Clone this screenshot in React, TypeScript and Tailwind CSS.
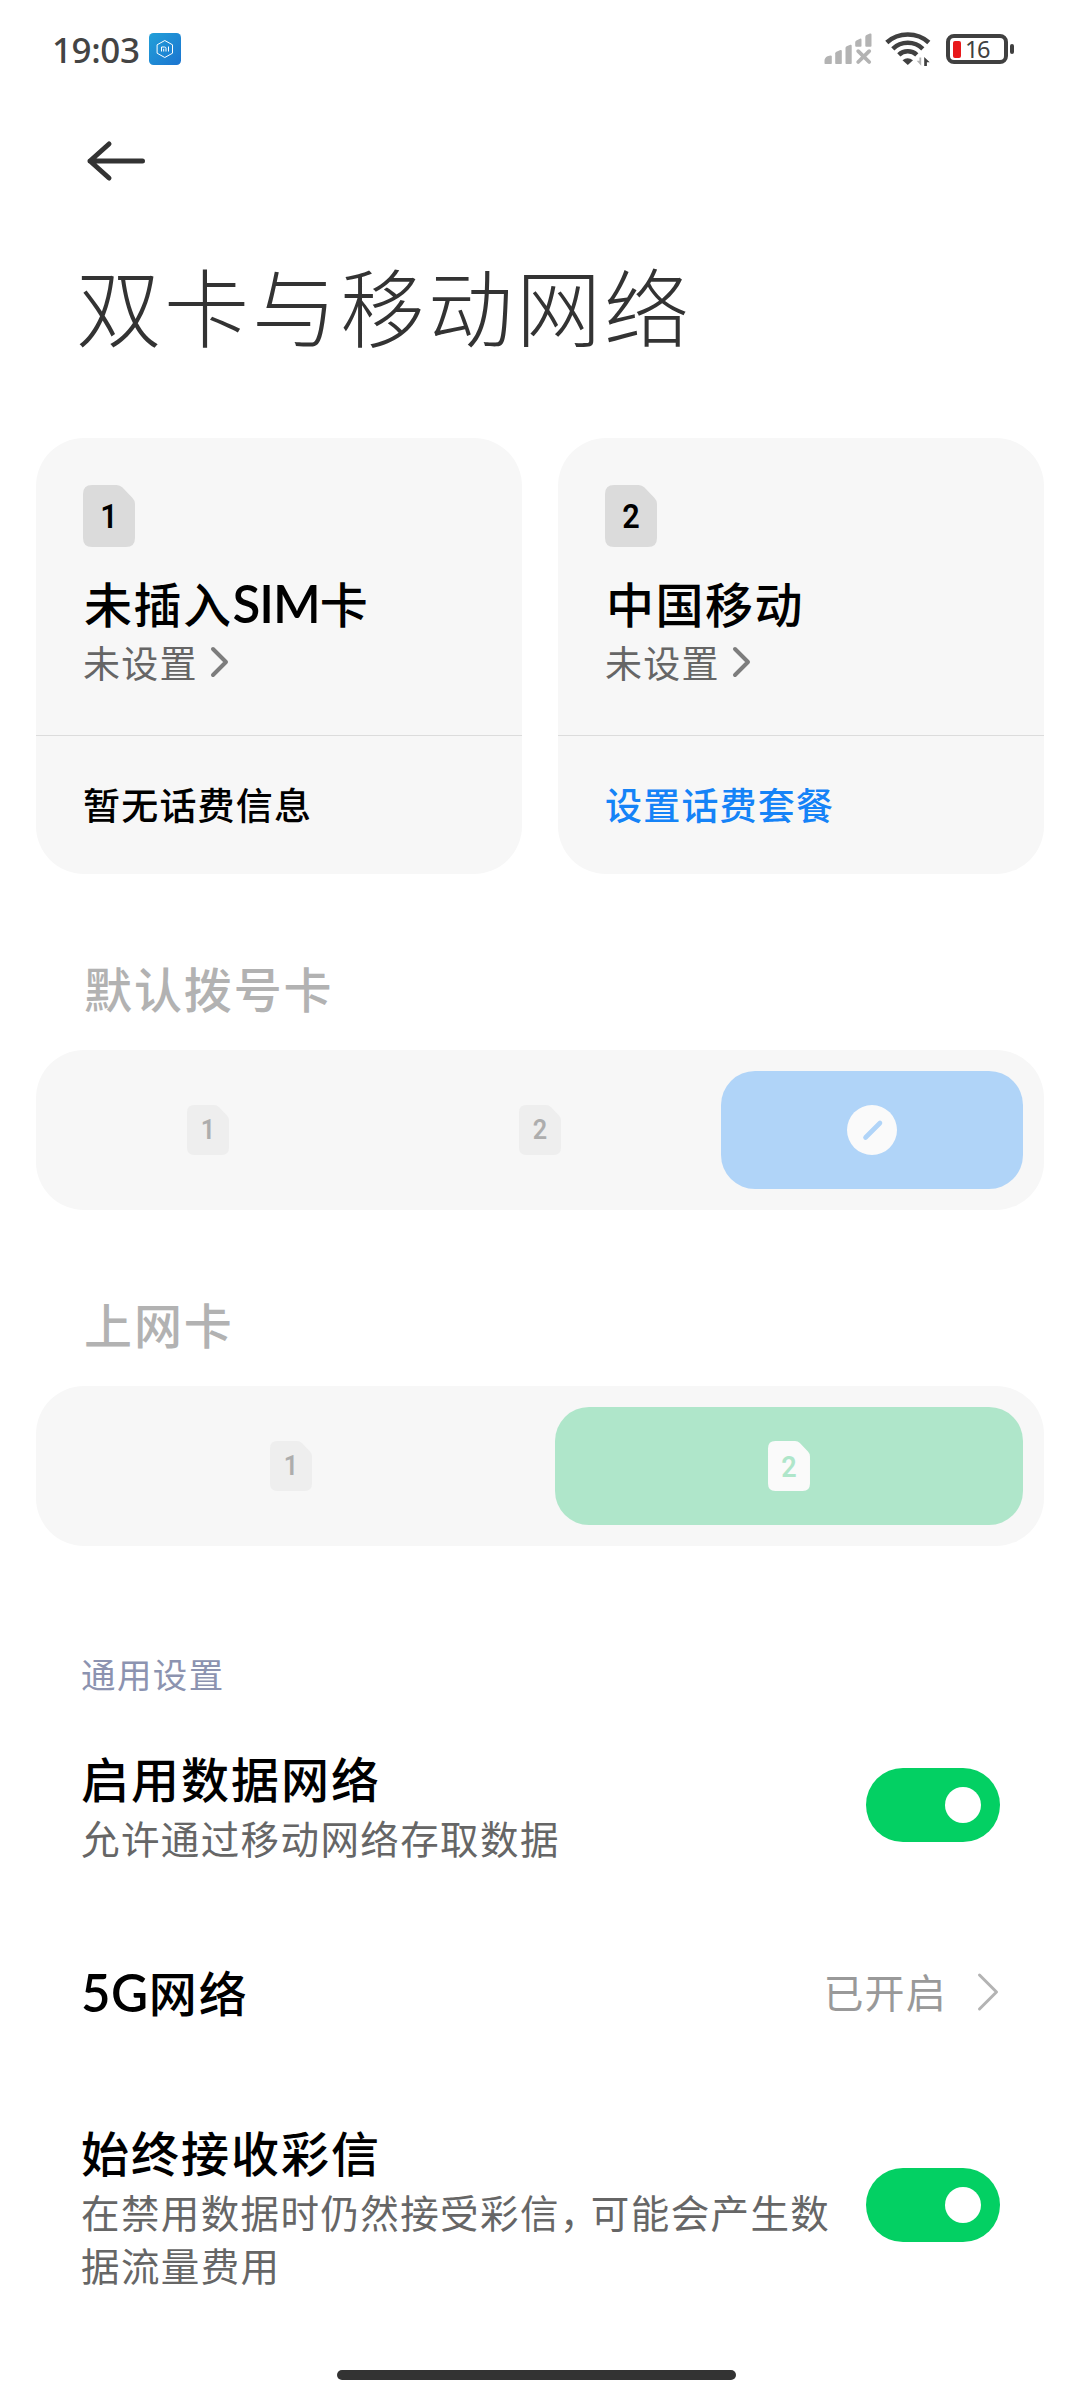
import type { ReactNode } from "react";

interface SimCardProps {
  slot: number;
  name: ReactNode;
  status: string;
  footer: string;
  footerClass: string;
}

const CHIP_TONE = {
  card: { fill: "fill-[#dbdbdb]", text: "text-black text-[34px]" },
  muted: { fill: "fill-[#eeeeee]", text: "text-[#adadad] text-[28px]" },
  active: { fill: "fill-[#fafafa]", text: "text-[#afe6ca] text-[30px]" },
};

function SignalIcon() {
  return (
    <svg className="h-[32px] w-[48px]" viewBox="0 0 48 32" fill="#b3b3b3">
      <path d="M.5 30.2v-2.4q0-3 3-4.5 4-1.600 4.300 0v6.900q0 .8-.8.8H1.300q-.8 0-.8-.8z" />
      <path d="M11.200 20.500q0-1.300 1.200-1.800l4-1.600q1.400-.3 1.400 1v12.100q0 .8-.8.8h-5q-.8 0-.8-.8z" />
      <path d="M21.500 15q0-1.300 1.200-1.800l3.600-1.500q1.400-.3 1.400 1v17.500q0 .8-.8.8h-4.600q-.8 0-.8-.8z" />
      <path d="M31.200 9.500q0-1.400 1.200-1.900l3.600-1.900q1.500-.4 1.500 1v6q0 1-.9 1h-4.500q-.9 0-.9-1z" />
      <path d="M41.300 4q0-1.400 1.200-1.900l3.400-1.600q1.600-.4 1.600 1v11.200q0 1-.9 1h-4.400q-.9 0-.9-1z" />
      <path d="M34.200 18.200 45.200 29M45.200 18.200 34.200 29" stroke="#b3b3b3" strokeWidth="3.800" strokeLinecap="round" />
    </svg>
  );
}

function WifiIcon() {
  return (
    <svg className="h-[36px] w-[46px]" viewBox="0 0 46 36" fill="none" stroke="#404040" strokeWidth="4.600">
      <path d="M1.800 11.500Q10.500 3.500 22.800 3.500T43.800 11.500" />
      <path d="M7.800 17.800Q14 11.800 22.800 11.800T37.800 17.800" />
      <path d="M13.800 23.800Q17.500 20.300 22.800 20.300T31.800 23.800" />
      <path d="M17.500 29.300q5-4 10.500 0L22.800 34z" fill="#404040" stroke="none" />
      <path d="M36.200 26.500v8.200l-4.500-5h2.700v-3.200z" fill="#b3b3b3" stroke="none" />
      <path d="M39.200 35v-9l5.500 5.200h-2.800V35z" fill="#404040" stroke="none" />
    </svg>
  );
}

function Battery({ level }: { level: number }) {
  return (
    <div className="flex items-center gap-[2px]">
      <div className="flex h-[30px] w-[62px] items-center rounded-[8px] border-4 border-[#404040] pl-[3px]">
        <span className="h-[17px] w-[8px] rounded-[2px] bg-[#e8191c]" />
        <span className="ml-[4px] font-['Noto_Sans'] text-[23.5px] leading-[22px] tracking-[-1.500px] text-[#404040]">
          {level}
        </span>
      </div>
      <span className="h-[10px] w-[4px] rounded-[2px] bg-[#404040]" />
    </div>
  );
}

function StatusBar() {
  return (
    <div className="flex h-[98px] items-center pr-[66px] pl-[52px]">
      <span className="w-[88px] pt-[2px] font-['Noto_Sans'] text-[35px] leading-[40px] font-medium tracking-[-0.400px] whitespace-nowrap text-[#444444]">
        19:03
      </span>
      <svg className="ml-[9px] h-[32px] w-[32px]" viewBox="0 0 32 32" fill="none">
        <defs>
          <linearGradient id="mi" x1="0" y1="0" x2="1" y2="1">
            <stop offset="0" stopColor="#22a0d8" />
            <stop offset="1" stopColor="#1b74d0" />
          </linearGradient>
        </defs>
        <rect width="32" height="32" rx="4.500" fill="url(#mi)" />
        <path d="M15.800 7.500l7.700 4.300v8.400l-7.700 4.300-7.700-4.300v-8.400z" stroke="#fff" />
        <path d="M12.500 18.500v-4.500h3q1.500 0 1.500 1.500v3M14.700 15.800v2.700M19.500 13.500v5" stroke="#fff" />
      </svg>
      <div className="ml-auto flex items-center">
        <SignalIcon />
        <span className="ml-[13px]">
          <WifiIcon />
        </span>
        <span className="ml-[15px]">
          <Battery level={16} />
        </span>
      </div>
    </div>
  );
}

function SimChip({ slot, tone, large }: { slot: number; tone: keyof typeof CHIP_TONE; large?: boolean }) {
  const { fill, text } = CHIP_TONE[tone];
  return (
    <div className={`relative ${large ? "h-[62px] w-[52px]" : "h-[50px] w-[42px]"}`}>
      <svg className={`h-full w-full ${fill}`} viewBox="0 0 52 62">
        <path d="M9 0h24.500q3.500 0 6 2.500l10 10.500q2.500 2.500 2.500 6v34q0 9-9 9H9q-9 0-9-9V9q0-9 9-9z" />
      </svg>
      <span
        className={`absolute inset-0 flex scale-x-90 items-center justify-center font-['Roboto'] font-semibold ${text}`}
      >
        {slot}
      </span>
    </div>
  );
}

// Latin runs inside Chinese titles use a rounder, slightly larger face
function Latin({ children }: { children: ReactNode }) {
  return <span className="font-['Lato'] text-[51px] font-semibold">{children}</span>;
}

function SimCard({ slot, name, status, footer, footerClass }: SimCardProps) {
  return (
    <div className="h-[436px] w-[486px] rounded-[48px] bg-[#f7f7f7]">
      <div className="h-[298px] border-b border-[#dcdcdc] pt-[47px] pl-[47px]">
        <SimChip slot={slot} tone="card" large />
        <p className="mt-[30px] h-[50px] pl-px text-[48px] leading-[50px] font-medium tracking-[1.500px] text-black">
          {name}
        </p>
        <div className="mt-[15px] flex items-center">
          <span className="text-[37px] leading-[40px] tracking-[1.200px] text-[#666666]">{status}</span>
          <svg className="ml-[12px] h-[32px] w-[20px]" viewBox="0 0 20 32" fill="none">
            <path d="M3 3l13 13L3 29" stroke="#7d7d7d" strokeWidth="4" strokeLinecap="round" strokeLinejoin="round" />
          </svg>
        </div>
      </div>
      <p className={`pt-[48px] pl-[47px] text-[37px] leading-[40px] font-medium tracking-[1.200px] ${footerClass}`}>
        {footer}
      </p>
    </div>
  );
}

function SegmentRow({ title, children }: { title: string; children: ReactNode }) {
  return (
    <section>
      <h2 className="pt-px pl-[84px] text-[48px] leading-[50px] font-medium tracking-[1.900px] text-[#b2b2b2]">
        {title}
      </h2>
      <div className="mx-[36px] mt-[38px] flex h-[160px] gap-[30px] rounded-[48px] bg-[#f7f7f7] p-[21px]">
        {children}
      </div>
    </section>
  );
}

function Segment({ className = "", children }: { className?: string; children: ReactNode }) {
  return <div className={`flex flex-1 items-center justify-center rounded-[34px] ${className}`}>{children}</div>;
}

function Toggle() {
  return (
    <div className="mb-[7px] flex h-[74px] w-[134px] shrink-0 items-center justify-end rounded-full bg-[#03d063] pr-[19px]">
      <span className="h-[36px] w-[36px] rounded-full bg-white" />
    </div>
  );
}

function SettingText({ title, children }: { title: string; children: ReactNode }) {
  return (
    <div>
      <h3 className="text-[48px] leading-[50px] font-medium tracking-[2px] text-black">{title}</h3>
      <p className="mt-[9px] text-[38.500px] leading-[53px] tracking-[1.400px] whitespace-nowrap text-[#666666]">
        {children}
      </p>
    </div>
  );
}

export default function App() {
  return (
    <main className="flex h-[2400px] w-[1080px] flex-col bg-white font-['Noto_Sans_CJK_SC',sans-serif]">
      <StatusBar />

      <header className="flex h-[125px] items-center pl-[85px]">
        <svg className="h-[44px] w-[62px]" viewBox="0 0 62 44" fill="none">
          <path
            d="M24 5L5 22l19 17M5 22h52.500"
            stroke="#333333"
            strokeWidth="5"
            strokeLinecap="round"
            strokeLinejoin="round"
          />
        </svg>
      </header>

      <h1 className="mt-[31px] pl-[76px] text-[85px] leading-[100px] font-light tracking-[3px] text-[#333333]">
        双卡与移动网络
      </h1>

      <div className="mt-[84px] flex gap-[36px] px-[36px]">
        <SimCard
          slot={1}
          name={
            <>
              未插入
              <span className="tracking-[-1px]">
                <Latin>SIM</Latin>
              </span>
              卡
            </>
          }
          status="未设置"
          footer="暂无话费信息"
          footerClass="text-black"
        />
        <SimCard slot={2} name="中国移动" status="未设置" footer="设置话费套餐" footerClass="text-[#1583f7]" />
      </div>

      <div className="mt-[87px] flex flex-col gap-[87px]">
        <SegmentRow title="默认拨号卡">
          <Segment>
            <SimChip slot={1} tone="muted" />
          </Segment>
          <Segment>
            <SimChip slot={2} tone="muted" />
          </Segment>
          <Segment className="bg-[#b0d4f8]">
            <svg className="h-[50px] w-[50px]" viewBox="0 0 50 50">
              <circle cx="25" cy="25" r="25" fill="#fafafa" />
              <path d="M18.500 32.500l14.500-14.500" stroke="#b0d4f8" strokeWidth="4.600" strokeLinecap="round" />
            </svg>
          </Segment>
        </SegmentRow>

        <SegmentRow title="上网卡">
          <Segment>
            <SimChip slot={1} tone="muted" />
          </Segment>
          <Segment className="bg-[#afe6ca]">
            <SimChip slot={2} tone="active" />
          </Segment>
        </SegmentRow>
      </div>

      <section className="pr-[80px] pl-[81px]">
        <p className="mt-[107px] text-[34.500px] leading-[40px] tracking-[1.400px] text-[#8c93b0]">通用设置</p>

        <div className="mt-[59px] flex items-center justify-between">
          <SettingText title="启用数据网络">允许通过移动网络存取数据</SettingText>
          <Toggle />
        </div>

        <div className="mt-[102px] flex h-[50px] items-center">
          <h3 className="h-[50px] text-[48px] leading-[50px] font-medium tracking-[2px] text-black">
            <span className="tracking-[0.500px]">
              <Latin>5G</Latin>
            </span>
            网络
          </h3>
          <span className="ml-auto text-[40px] leading-[50px] tracking-[1.200px] text-[#999999]">已开启</span>
          <svg className="ml-[29px] h-[42px] w-[24px]" viewBox="0 0 24 42" fill="none">
            <path d="M3.500 5l17 17-17 17" stroke="#b3b3b3" strokeWidth="3" strokeLinecap="round" strokeLinejoin="round" />
          </svg>
        </div>

        <div className="mt-[110px] flex items-center justify-between">
          <SettingText title="始终接收彩信">
            在禁用数据时仍然接受彩信<span className="tracking-[-7.500px]">，</span>可能会产生数
            <br />
            据流量费用
          </SettingText>
          <Toggle />
        </div>
      </section>

      <div className="ml-[337px] mt-[79px] h-[10px] w-[399px] rounded-full bg-[#333333]" />
    </main>
  );
}
